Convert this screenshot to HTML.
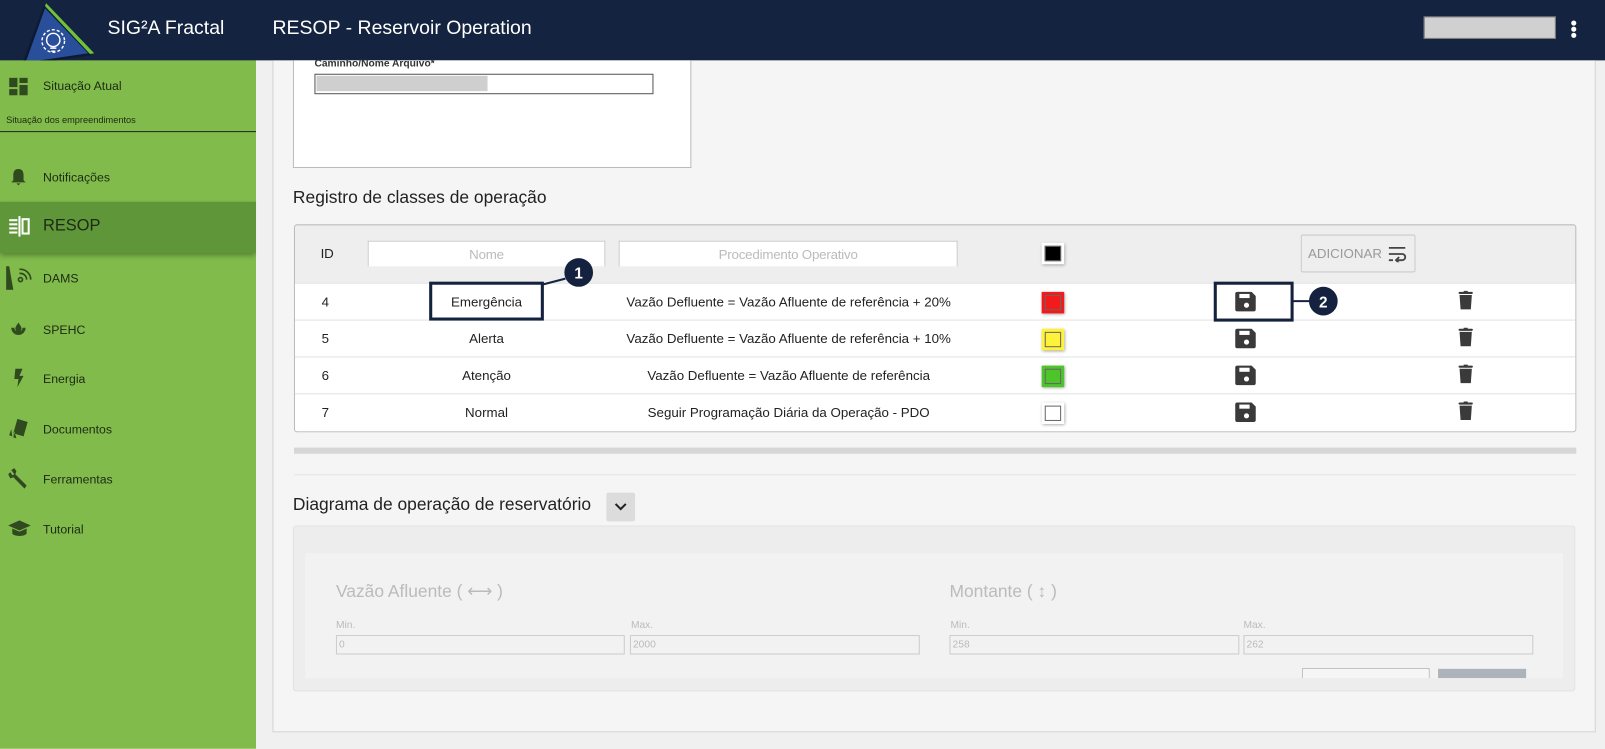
<!DOCTYPE html>
<html><head><meta charset="utf-8"><style>
*{box-sizing:border-box;margin:0;padding:0}
html,body{width:1605px;height:749px;overflow:hidden;background:#f0f0f0;font-family:"Liberation Sans",sans-serif}
#s{position:absolute;left:0;top:0;width:1567px;height:731px;transform:scale(1.02425);transform-origin:0 0;background:#f0f0f0}
.a{position:absolute}
.hdr{left:0;top:0;width:1567px;height:59px;background:#14233f}
.side{left:0;top:59px;width:250px;height:672px;background:#80bb4b}
.it{position:absolute;left:42px;font-size:12px;color:#1e2a14}
.ic{position:absolute;left:8px}
.t{font-size:13px;color:#222;letter-spacing:-0.2px}
.c{text-align:center}
.row{position:absolute;left:0;width:1251px;height:36px;border-top:1px solid #e2e2e2;background:#fff}
.row div{position:absolute;top:10px;font-size:13px;color:#222}
.sw{position:absolute;top:8px;left:729px;width:22px;height:21px;box-shadow:1px 1px 3px #999;padding:3px}
.sw i{display:block;width:100%;height:100%;border:1px solid #666}
.lb{font-size:10px;color:#bbb}
.in{position:absolute;height:19px;border:1px solid #ccc;font-size:10px;color:#bbb;padding:3px 2px}
</style></head><body><div id="s">
<div class="a hdr"></div>
<svg class="a" style="left:16px;top:0" width="80" height="72" viewBox="16 0 80 72">
<polygon points="45,3 92,52 23,64" fill="#6fc23a"/>
<polygon points="43,5 89,54 21,64" fill="#0e1a33"/>
<polygon points="44,8 86,52 25,61" fill="#2a4f9a"/>
<g fill="none" stroke="#fff" stroke-width="1.4"><circle cx="52" cy="40" r="11" stroke-dasharray="3 2"/><circle cx="52" cy="39" r="6.5"/><path d="M49 47h6M50 50h4"/></g>
</svg>
<div class="a" style="left:105px;top:17px;font-size:19px;color:#fff">SIG²A Fractal</div>
<div class="a" style="left:266px;top:17px;font-size:19px;color:#fff">RESOP - Reservoir Operation</div>
<div class="a" style="left:1390px;top:16px;width:129px;height:22px;background:#d0d0d0;border:1px solid #777"></div>
<div class="a" style="left:1534px;top:20px;width:5px;height:5px;border-radius:50%;background:#fff;box-shadow:0 6px 0 #fff,0 12px 0 #fff"></div>

<div class="a side"></div>
<div class="a" style="left:0;top:128px;width:250px;height:1px;background:#1e2a14"></div>
<div class="a" style="left:0;top:197px;width:250px;height:50px;background:#5e9639;box-shadow:0 3px 5px rgba(0,0,0,.3)"></div>
<svg class="ic" style="top:75px" width="20" height="20"><g fill="#2f4a1f"><rect x="1" y="1" width="8" height="9"/><rect x="11" y="1" width="8" height="5"/><rect x="1" y="12" width="8" height="6"/><rect x="11" y="8" width="8" height="10"/></g></svg>
<div class="it" style="top:77px">Situação Atual</div>
<div class="a" style="left:6px;top:112px;font-size:9px;color:#1e2a14">Situação dos empreendimentos</div>
<svg class="ic" style="top:163px" width="20" height="20"><path d="M10 2c-4 0-5 3-5 6v5l-2 2h14l-2-2V8c0-3-1-6-5-6zM8 16h4l-2 2z" fill="#2f4a1f"/></svg>
<div class="it" style="top:166px">Notificações</div>
<svg class="ic" style="top:210px" width="22" height="22"><g fill="#fff"><rect x="1" y="4" width="8" height="2"/><rect x="1" y="8" width="8" height="2"/><rect x="1" y="12" width="8" height="2"/><rect x="1" y="16" width="8" height="2"/><rect x="10" y="1" width="2" height="20"/><rect x="14" y="4" width="6" height="14" fill="none" stroke="#fff" stroke-width="2"/></g></svg>
<div class="it" style="top:212px;font-size:16px">RESOP</div>
<svg class="ic" style="left:5px;top:259px" width="26" height="24"><path d="M1 1h3l4 23H1z" fill="#2f4a1f"/><g fill="none" stroke="#2f4a1f" stroke-width="1.6"><circle cx="15" cy="14" r="2"/><path d="M14 8a6 6 0 0 1 7 6M14 4a10 10 0 0 1 11 10"/></g></svg>
<div class="it" style="top:265px">DAMS</div>
<svg class="ic" style="top:312px" width="20" height="20"><path d="M3 8a7 7 0 0 0 14 0h-3a4 4 0 0 1-8 0zM10 3c-2 3-3 4-3 6a3 3 0 0 0 6 0c0-2-1-3-3-6z" fill="#2f4a1f"/></svg>
<div class="it" style="top:315px">SPEHC</div>
<svg class="ic" style="top:359px" width="20" height="20"><path d="M7 1h7l-3 7h4l-6 11 1-8H6z" fill="#2f4a1f"/></svg>
<div class="it" style="top:363px">Energia</div>
<svg class="ic" style="top:407px" width="22" height="22"><path d="M9 2l10 3-4 14-10-3zM3 12l-2 6 3 1zM6 14l-1 6 3 1z" fill="#2f4a1f"/></svg>
<div class="it" style="top:412px">Documentos</div>
<svg class="ic" style="top:456px" width="22" height="22"><path d="M3 3l3-2 2 3-1 3 11 11-2 3L5 10 2 11 0 7l2-2 2 3 2-1z" fill="#2f4a1f"/></svg>
<div class="it" style="top:461px">Ferramentas</div>
<svg class="ic" style="top:506px" width="22" height="20"><path d="M11 2L0 7l11 5 11-5zM4 10v5c2 3 12 3 14 0v-5l-7 3z" fill="#2f4a1f"/></svg>
<div class="it" style="top:510px">Tutorial</div>

<div class="a" style="left:250px;top:59px;width:1317px;height:672px;background:#f0f0f0"></div>
<div class="a" style="left:266px;top:59px;width:1292px;height:656px;background:#f5f5f5;border:1px solid #d4d4d4;border-top:none"></div>
<div class="a" style="left:286px;top:59px;width:389px;height:105px;background:#fff;border:1px solid #bbb;border-top:none"></div>
<div class="a" style="left:307px;top:55px;font-size:10px;color:#333;font-weight:bold;height:14px;overflow:hidden;padding-top:2px">Caminho/Nome Arquivo*</div>
<div class="a" style="left:307px;top:72px;width:331px;height:20px;border:1px solid #555;padding:1px"><div style="width:167px;height:15px;background:#cfcfcf"></div></div>

<div class="a" style="left:286px;top:183px;font-size:17px;color:#222">Registro de classes de operação</div>

<div class="a" style="left:287px;top:219px;width:1252px;height:203px;border:1px solid #bbb;border-radius:3px;background:#eee;overflow:hidden">
 <div class="a t" style="left:25px;top:20px">ID</div>
 <div class="a t c" style="left:71px;top:15px;width:232px;height:25px;background:#fff;border:1px solid #ccc;border-bottom:none;color:#bbb;padding-top:5px">Nome</div>
 <div class="a t c" style="left:316px;top:15px;width:331px;height:25px;background:#fff;border:1px solid #ccc;border-bottom:none;color:#bbb;padding-top:5px">Procedimento Operativo</div>
 <div class="sw" style="top:17px;background:#fff"><i style="background:#000"></i></div>
 <div class="a" style="left:982px;top:9px;width:112px;height:37px;border:1px solid #ccc;border-radius:2px;font-size:13px;color:#999;padding:10px 0 0 6px">ADICIONAR
  <svg style="position:absolute;left:84px;top:10px" width="18" height="16"><g fill="none" stroke="#444" stroke-width="1.8"><path d="M1 2h16M1 8h13a3 3 0 0 1 0 6H9M1 14h4"/><path d="M11 11l-3 3 3 3"/></g></svg></div>
 <div class="row" style="top:56px"><div style="left:26px">4</div><div style="left:137px;width:100px;text-align:center">Emergência</div><div style="left:282px;width:400px;text-align:center">Vazão Defluente = Vazão Afluente de referência + 20%</div><span class="sw" style="background:#f21a1a"><i></i></span></div>
 <div class="row" style="top:92px"><div style="left:26px">5</div><div style="left:137px;width:100px;text-align:center">Alerta</div><div style="left:282px;width:400px;text-align:center">Vazão Defluente = Vazão Afluente de referência + 10%</div><span class="sw" style="background:#fff23a"><i></i></span></div>
 <div class="row" style="top:128px"><div style="left:26px">6</div><div style="left:137px;width:100px;text-align:center">Atenção</div><div style="left:282px;width:400px;text-align:center">Vazão Defluente = Vazão Afluente de referência</div><span class="sw" style="background:#4dc42a"><i></i></span></div>
 <div class="row" style="top:164px;height:40px"><div style="left:26px">7</div><div style="left:137px;width:100px;text-align:center">Normal</div><div style="left:282px;width:400px;text-align:center">Seguir Programação Diária da Operação - PDO</div><span class="sw" style="background:#fff"><i></i></span></div>
</div>
<svg class="a" style="left:0;top:0" width="1567" height="731">
<g fill="#3a3a3a">
 <g id="sv"><path d="M1208 285h14l4 4v13a2 2 0 0 1-2 2h-16a2 2 0 0 1-2-2v-15a2 2 0 0 1 2-2z"/><rect x="1210" y="287" width="10" height="4" fill="#fff"/><circle cx="1217" cy="298" r="2.5" fill="#fff"/></g>
 <use href="#sv" y="36"/><use href="#sv" y="72"/><use href="#sv" y="108"/>
 <g id="tr"><rect x="1424" y="285" width="14" height="2" rx="1"/><rect x="1429" y="284" width="4" height="2"/><path d="M1425 288h12l-1 14h-10z"/></g>
 <use href="#tr" y="36"/><use href="#tr" y="72"/><use href="#tr" y="108"/>
</g>
<rect x="420.5" y="276.5" width="109" height="35" fill="none" stroke="#14223f" stroke-width="3"/>
<path d="M529 278L552 272" stroke="#14223f" stroke-width="2"/>
<circle cx="565" cy="266" r="14" fill="#14223f"/>
<text x="565" y="272" fill="#fff" font-size="15" font-weight="bold" text-anchor="middle" font-family="Liberation Sans">1</text>
<rect x="1186.5" y="276.5" width="75" height="36" fill="none" stroke="#14223f" stroke-width="3"/>
<path d="M1262 294H1280" stroke="#14223f" stroke-width="2"/>
<circle cx="1292" cy="294" r="14" fill="#14223f"/>
<text x="1292" y="300" fill="#fff" font-size="15" font-weight="bold" text-anchor="middle" font-family="Liberation Sans">2</text>
</svg>

<div class="a" style="left:287px;top:437px;width:1252px;height:6px;background:#d6d6d6"></div>
<div class="a" style="left:287px;top:463px;width:1252px;height:1px;background:#e4e4e4"></div>
<div class="a" style="left:286px;top:483px;font-size:17px;color:#222">Diagrama de operação de reservatório</div>
<div class="a" style="left:592px;top:481px;width:28px;height:28px;background:#dcdcdc;border-radius:2px"><svg width="28" height="28"><path d="M9 11l5 5 5-5" fill="none" stroke="#222" stroke-width="2"/></svg></div>
<div class="a" style="left:286px;top:513px;width:1252px;height:162px;background:#ededed;border:1px solid #e2e2e2;border-radius:3px"></div>
<div class="a" style="left:298px;top:540px;width:1228px;height:122px;background:#f2f2f2"></div>
<div class="a" style="left:328px;top:568px;font-size:17px;color:#bbb">Vazão Afluente ( ⟷ )</div>
<div class="a" style="left:927px;top:568px;font-size:17px;color:#bbb">Montante ( ↕ )</div>
<div class="a lb" style="left:328px;top:605px">Min.</div>
<div class="a lb" style="left:616px;top:605px">Max.</div>
<div class="a lb" style="left:928px;top:605px">Min.</div>
<div class="a lb" style="left:1214px;top:605px">Max.</div>
<div class="in" style="left:328px;top:620px;width:282px">0</div>
<div class="in" style="left:615px;top:620px;width:283px">2000</div>
<div class="in" style="left:927px;top:620px;width:283px">258</div>
<div class="in" style="left:1214px;top:620px;width:283px">262</div>
<div class="a" style="left:1271px;top:652px;width:125px;height:10px;border:1px solid #bbb;border-bottom:none;border-radius:2px 2px 0 0;background:#f6f6f6"></div>
<div class="a" style="left:1404px;top:653px;width:86px;height:9px;background:#adb3ba"></div>
</div></body></html>
